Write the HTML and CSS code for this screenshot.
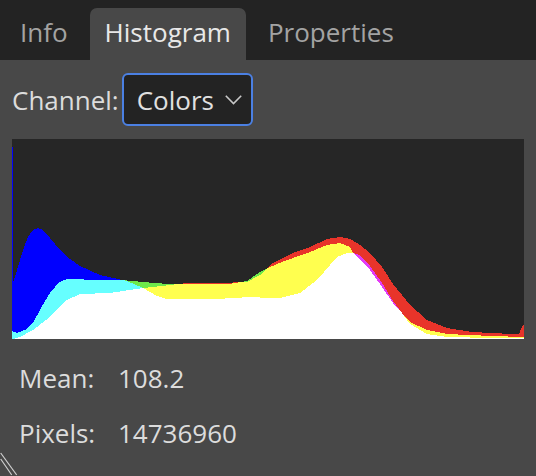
FILE: index.html
```html
<!DOCTYPE html>
<html>
<head>
<meta charset="utf-8">
<link rel="stylesheet" href="styles.css">
</head>
<body>
<div class="panel">
  <div class="tabs">
    <div class="tab">Info</div>
    <div class="tab active">Histogram</div>
    <div class="tab">Properties</div>
  </div>
  <div class="channel-row">
    <span class="label">Channel:</span>
    <div class="select">
      <span>Colors</span>
      <svg class="chevron" width="17" height="10" viewBox="0 0 17 10"><polyline points="0.8,0.8 8.5,8.5 16.2,0.8" fill="none" stroke="#c8c8c8" stroke-width="1.6"/></svg>
    </div>
  </div>
  <div class="histogram"><canvas id="hist" width="512" height="200"></canvas></div>
  <div class="stats">
    <span>Mean:</span><span>108.2</span>
    <span>Pixels:</span><span>14736960</span>
  </div>
  <svg class="grip" width="20" height="24" viewBox="0 0 20 24"><line x1="0.7" y1="1" x2="16.7" y2="23" stroke="#d0d0d0" stroke-width="1.2"/><line x1="0.7" y1="7" x2="11.7" y2="23" stroke="#d0d0d0" stroke-width="1.2"/></svg>
</div>
<script src="script.js"></script>
</body>
</html>
```
FILE: styles.css
```css
html, body {
  margin: 0;
  padding: 0;
  background: #484848;
  font-family: "Open Sans", "Noto Sans", sans-serif;
}
.panel {
  position: relative;
  height: 476px;
  overflow: hidden;
}
.tabs {
  display: flex;
  gap: 7px;
  height: 60px;
  box-sizing: border-box;
  padding: 8px 0 0 5px;
  background: #232323;
}
.tab {
  padding: 6px 15px 0;
  font-size: 26px;
  line-height: 36px;
  color: #a3a3a3;
  border-radius: 7px 7px 0 0;
}
.tab.active {
  background: #484848;
  color: #e8e8e8;
}
.channel-row {
  display: flex;
  align-items: center;
  gap: 3px;
  padding: 13px 12px 0;
  font-size: 26px;
  color: #dcdcdc;
}
.select {
  display: flex;
  align-items: center;
  gap: 11px;
  height: 53px;
  box-sizing: border-box;
  padding: 0 9px 0 13px;
  border: 2px solid #4b80e3;
  border-radius: 6px;
  background: #232323;
  color: #e0e0e0;
}
.chevron {
  display: block;
}
.histogram {
  margin: 13px 12px 0;
  height: 200px;
  background: #262626;
}
.histogram canvas {
  display: block;
}
.stats {
  display: grid;
  grid-template-columns: 99px auto;
  justify-content: start;
  padding: 12px 0 0 19px;
  font-size: 26px;
  line-height: 55px;
  color: #dcdcdc;
}
.grip {
  position: absolute;
  left: 0;
  bottom: 0;
}
```
FILE: script.js
```js
(function () {
  var B = [[0,192],[0.99,192],[1,56],[5,69],[11,89],[16,102],[21,109],[26,111],[31,109],[38,101],[47,90],[55,82],[68,73],[88,64],[115,58],[131,51],[145,43],[155,40],[205,40],[238,42],[258,41],[268,41],[288,46],[305,59],[325,82],[335,86],[341,86],[348,84],[358,73],[370,56],[381,38],[398,15],[415,5],[435,2],[480,1],[511,0.5]];
  var G = [[0,8],[5,6],[15,10],[22,18],[28,29],[33,38],[38,46],[43,52],[48,57],[55,60],[88,59],[115,58.5],[131,57],[150,55.5],[175,55],[220,55.5],[235,58],[248,67],[258,72],[270,77],[281,81],[298,87],[315,94],[328,96],[338,92],[341,86],[348,80],[358,69],[370,52],[381,36],[398,17],[415,9],[435,5],[480,3],[511,2]];
  var R = [[0,0],[1.3,0],[8,2],[21,9],[38,22],[55,39],[68,45],[98,46],[131,51],[150,53],[175,56],[221,56.5],[235,57],[248,64],[261,76],[281,86],[298,92],[315,100],[328,102],[338,100],[348,94],[358,86],[370,72],[381,55],[398,34],[415,19],[435,11],[460,7],[500,5],[507,5],[509,10],[511,14]];
  function at(pts, x) {
    if (x <= pts[0][0]) return pts[0][1];
    for (var i = 1; i < pts.length; i++) {
      if (x <= pts[i][0]) {
        var a = pts[i - 1], b = pts[i];
        return a[1] + (b[1] - a[1]) * (x - a[0]) / (b[0] - a[0]);
      }
    }
    return pts[pts.length - 1][1];
  }
  var col = {
    r: '#e8342a', g: '#6ee84a', b: '#0000ff',
    gr: '#ffff4f', bg: '#66ffff', br: '#e23cf6'
  };
  var c = document.getElementById('hist');
  var ctx = c.getContext('2d');
  var H = 200;
  for (var x = 0; x < 512; x++) {
    var ch = [['r', at(R, x + 0.5)], ['g', at(G, x + 0.5)], ['b', at(B, x + 0.5)]];
    if (x === 0) { ch[2][1] = 192; }
    ch.sort(function (p, q) { return p[1] - q[1]; });
    var lo = Math.round(ch[0][1]), mid = Math.round(ch[1][1]), hi = Math.round(ch[2][1]);
    ctx.fillStyle = '#ffffff';
    ctx.fillRect(x, H - lo, 1, lo);
    var pair = [ch[1][0], ch[2][0]].sort().join('');
    ctx.fillStyle = col[pair];
    ctx.fillRect(x, H - mid, 1, mid - lo);
    ctx.fillStyle = col[ch[2][0]];
    ctx.fillRect(x, H - hi, 1, hi - mid);
  }
})();
```
